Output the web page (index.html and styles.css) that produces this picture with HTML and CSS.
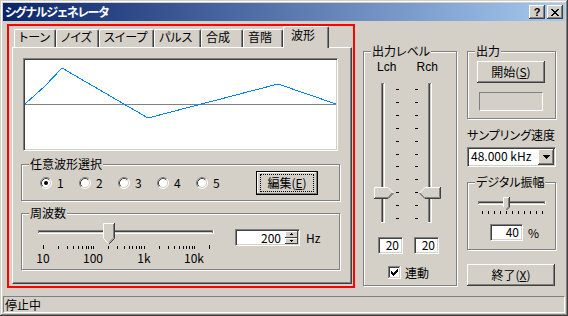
FILE: index.html
```html
<!DOCTYPE html>
<html lang="ja">
  <head>
    <meta charset="utf-8" />
    <title>シグナルジェネレータ</title>
    <link rel="stylesheet" href="styles.css">
  </head>

  <body>
    <div class="window">
      <!-- Title bar -->
      <div class="titlebar">
        <span class="title">シグナルジェネレータ</span>
        <div class="caption-buttons">
          <div class="cap-btn cap-help">?</div>
          <div class="cap-btn">
            <svg width="8" height="7" viewBox="0 0 8 7">
              <path d="M0 0h2v1h-2z M6 0h2v1h-2z M1 1h2v1h-2z M5 1h2v1h-2z M2 2h4v1h-4z M3 3h2v1h-2z M2 4h4v1h-4z M1 5h2v1h-2z M5 5h2v1h-2z M0 6h2v1h-2z M6 6h2v1h-2z" fill="#000"/>
            </svg>
          </div>
        </div>
      </div>

      <div class="client">
        <!-- Tab control (highlighted) -->
        <div class="highlight">
          <div class="tabs">
            <div class="tab tab-tone">トーン</div>
            <div class="tab tab-noise">ノイズ</div>
            <div class="tab tab-sweep">スイープ</div>
            <div class="tab tab-pulse">パルス</div>
            <div class="tab tab-synth">合成</div>
            <div class="tab tab-scale">音階</div>
            <div class="tab tab-wave active">波形</div>
          </div>
          <div class="tab-panel">
            <div class="wave-view">
              <svg width="311" height="89" viewBox="0 0 311 89">
                <line x1="0" y1="44.5" x2="311" y2="44.5" stroke="#808080"/>
                <polyline points="0,44 20,26 37,8 123,58 253,24 311,44" fill="none" stroke="#0080ff" shape-rendering="crispEdges"/>
              </svg>
            </div>

            <div class="group wave-select">
              <div class="group-title">任意波形選択</div>
              <div class="radio-row">
                <div class="radio">
                  <svg width="12" height="12" viewBox="0 0 12 12">
                    <circle cx="6" cy="6" r="5" fill="#fff"/>
                    <path d="M2.11 9.89A5.5 5.5 0 0 1 9.89 2.11" fill="none" stroke="#808080"/>
                    <path d="M9.89 2.11A5.5 5.5 0 0 1 2.11 9.89" fill="none" stroke="#fff"/>
                    <path d="M2.82 9.18A4.5 4.5 0 0 1 9.18 2.82" fill="none" stroke="#404040"/>
                    <path d="M9.18 2.82A4.5 4.5 0 0 1 2.82 9.18" fill="none" stroke="#d4d0c8"/>
                    <circle cx="6" cy="6" r="2" fill="#000"/>
                  </svg>
                  <span>1</span>
                </div>
                <div class="radio">
                  <svg width="12" height="12" viewBox="0 0 12 12">
                    <circle cx="6" cy="6" r="5" fill="#fff"/>
                    <path d="M2.11 9.89A5.5 5.5 0 0 1 9.89 2.11" fill="none" stroke="#808080"/>
                    <path d="M9.89 2.11A5.5 5.5 0 0 1 2.11 9.89" fill="none" stroke="#fff"/>
                    <path d="M2.82 9.18A4.5 4.5 0 0 1 9.18 2.82" fill="none" stroke="#404040"/>
                    <path d="M9.18 2.82A4.5 4.5 0 0 1 2.82 9.18" fill="none" stroke="#d4d0c8"/>
                  </svg>
                  <span>2</span>
                </div>
                <div class="radio">
                  <svg width="12" height="12" viewBox="0 0 12 12">
                    <circle cx="6" cy="6" r="5" fill="#fff"/>
                    <path d="M2.11 9.89A5.5 5.5 0 0 1 9.89 2.11" fill="none" stroke="#808080"/>
                    <path d="M9.89 2.11A5.5 5.5 0 0 1 2.11 9.89" fill="none" stroke="#fff"/>
                    <path d="M2.82 9.18A4.5 4.5 0 0 1 9.18 2.82" fill="none" stroke="#404040"/>
                    <path d="M9.18 2.82A4.5 4.5 0 0 1 2.82 9.18" fill="none" stroke="#d4d0c8"/>
                  </svg>
                  <span>3</span>
                </div>
                <div class="radio">
                  <svg width="12" height="12" viewBox="0 0 12 12">
                    <circle cx="6" cy="6" r="5" fill="#fff"/>
                    <path d="M2.11 9.89A5.5 5.5 0 0 1 9.89 2.11" fill="none" stroke="#808080"/>
                    <path d="M9.89 2.11A5.5 5.5 0 0 1 2.11 9.89" fill="none" stroke="#fff"/>
                    <path d="M2.82 9.18A4.5 4.5 0 0 1 9.18 2.82" fill="none" stroke="#404040"/>
                    <path d="M9.18 2.82A4.5 4.5 0 0 1 2.82 9.18" fill="none" stroke="#d4d0c8"/>
                  </svg>
                  <span>4</span>
                </div>
                <div class="radio">
                  <svg width="12" height="12" viewBox="0 0 12 12">
                    <circle cx="6" cy="6" r="5" fill="#fff"/>
                    <path d="M2.11 9.89A5.5 5.5 0 0 1 9.89 2.11" fill="none" stroke="#808080"/>
                    <path d="M9.89 2.11A5.5 5.5 0 0 1 2.11 9.89" fill="none" stroke="#fff"/>
                    <path d="M2.82 9.18A4.5 4.5 0 0 1 9.18 2.82" fill="none" stroke="#404040"/>
                    <path d="M9.18 2.82A4.5 4.5 0 0 1 2.82 9.18" fill="none" stroke="#d4d0c8"/>
                  </svg>
                  <span>5</span>
                </div>
                <div class="btn btn-default edit-btn">
                  <span class="focus-rect">編集(<u>E</u>)</span>
                </div>
              </div>
            </div>

            <div class="group freq-group">
              <div class="group-title">周波数</div>
              <div class="freq-row">
                <svg class="freq-track" width="190" height="46" viewBox="0 0 190 46">
                  <rect x="8" y="10" width="176" height="4" fill="#fff"/>
                  <rect x="8" y="10" width="175" height="3" fill="#808080"/>
                  <rect x="9" y="11" width="173" height="2" fill="#404040"/>
                  <rect x="9" y="12" width="173" height="1" fill="#d4d0c8"/>
                  <path d="M13.5 25V29 M179.5 25V29
                           M28.5 26V29 M37.5 26V29 M43.5 26V29 M48.5 26V29 M52.5 26V29 M56.5 26V29 M58.5 26V29 M61.5 26V29
                           M63.5 26V29 M78.5 26V29 M87.5 26V29 M94.5 26V29 M99.5 26V29 M102.5 26V29 M106.5 26V29 M109.5 26V29 M111.5 26V29
                           M114.5 26V29 M129.5 26V29 M138.5 26V29 M144.5 26V29 M149.5 26V29 M153.5 26V29 M156.5 26V29 M159.5 26V29 M162.5 26V29
                           M164.5 26V29" stroke="#000" shape-rendering="crispEdges"/>
                  <polygon points="73,3 85,3 85,18 79,24 73,18" fill="#d4d0c8"/>
                  <polyline points="73.5,18 73.5,3.5 84,3.5" fill="none" stroke="#fff"/>
                  <polyline points="73.5,18.5 78.5,23.5" fill="none" stroke="#fff"/>
                  <polyline points="84.5,3 84.5,18.5 79,24" fill="none" stroke="#404040"/>
                  <polyline points="83.5,4 83.5,18 79,22.5" fill="none" stroke="#808080"/>
                  <text x="13" y="43" text-anchor="middle">10</text>
                  <text x="63" y="43" text-anchor="middle">100</text>
                  <text x="114" y="43" text-anchor="middle">1k</text>
                  <text x="164" y="43" text-anchor="middle">10k</text>
                </svg>
                <div class="spin-edit">
                  <span class="spin-value">200</span>
                  <div class="spin-buttons">
                    <div class="spin-btn">
                      <svg width="3" height="2" viewBox="0 0 3 2"><path d="M1 0h1v1h1v1h-3v-1h1z" fill="#000"/></svg>
                    </div>
                    <div class="spin-btn">
                      <svg width="3" height="2" viewBox="0 0 3 2"><path d="M0 0h3v1h-1v1h-1v-1h-1z" fill="#000"/></svg>
                    </div>
                  </div>
                </div>
                <span class="unit">Hz</span>
              </div>
            </div>
          </div>
        </div>

        <!-- Right side controls -->
        <div class="side">
          <div class="group level-group">
            <div class="group-title">出力レベル</div>
            <div class="ch-labels"><span>Lch</span><span>Rch</span></div>
            <svg class="level-sliders" width="92" height="150" viewBox="0 0 92 150">
              <rect x="17" y="4" width="4" height="140" fill="#fff"/>
              <rect x="17" y="4" width="3" height="139" fill="#808080"/>
              <rect x="18" y="5" width="2" height="138" fill="#404040"/>
              <rect x="19" y="5" width="1" height="138" fill="#d4d0c8"/>
              <rect x="64" y="4" width="4" height="140" fill="#fff"/>
              <rect x="64" y="4" width="3" height="139" fill="#808080"/>
              <rect x="65" y="5" width="2" height="138" fill="#404040"/>
              <rect x="66" y="5" width="1" height="138" fill="#d4d0c8"/>
              <path d="M32 10.5h3 M51 10.5h3 M32 23.5h3 M51 23.5h3 M32 36.5h3 M51 36.5h3 M32 49.5h3 M51 49.5h3
                       M32 62.5h3 M51 62.5h3 M32 75.5h3 M51 75.5h3 M32 87.5h3 M51 87.5h3 M32 100.5h3 M51 100.5h3
                       M32 113.5h3 M51 113.5h3 M32 126.5h3 M51 126.5h3 M32 139.5h3 M51 139.5h3" stroke="#000" shape-rendering="crispEdges"/>
              <polygon points="10,108 24,108 30,114 24,120 10,120" fill="#d4d0c8"/>
              <polyline points="10.5,119.5 10.5,108.5 24,108.5 29.5,114" fill="none" stroke="#fff"/>
              <polyline points="29.5,114 24,119.5 10,119.5" fill="none" stroke="#404040"/>
              <polyline points="28,114 24,118.5 11,118.5" fill="none" stroke="#808080"/>
              <polygon points="61,108 77,108 77,120 61,120 55,114" fill="#d4d0c8"/>
              <polyline points="55.5,114 61,108.5 76.5,108.5" fill="none" stroke="#fff"/>
              <polyline points="76.5,108 76.5,119.5 61,119.5 55.5,114" fill="none" stroke="#404040"/>
              <polyline points="75.5,109 75.5,118.5 61,118.5" fill="none" stroke="#808080"/>
            </svg>
            <div class="level-edits">
              <div class="edit level-edit">20</div>
              <div class="edit level-edit">20</div>
            </div>
            <div class="link-row">
              <svg width="13" height="13" viewBox="0 0 13 13">
                <rect width="13" height="13" fill="#fff"/>
                <path d="M0 0h12v1H1v11H0z" fill="#808080"/>
                <path d="M1 1h10v1H2v9H1z" fill="#404040"/>
                <path d="M12 0h1v13H0v-1h12z" fill="#fff"/>
                <path d="M11 1h1v11H1v-1h10z" fill="#d4d0c8"/>
                <path d="M9 3h1v1h-1z M8 4h2v1h-2z M3 5h1v1h-1z M7 5h3v1h-3z M3 6h2v1h-2z M6 6h3v1h-3z M3 7h5v1h-5z M4 8h3v1h-3z M5 9h1v1h-1z" fill="#000"/>
              </svg>
              <span>連動</span>
            </div>
          </div>

          <div class="side-col">
            <div class="group out-group">
              <div class="group-title">出力</div>
              <div class="btn start-btn">開始(<u>S</u>)</div>
              <div class="out-indicator"></div>
            </div>
            <div class="rate-label">サンプリング速度</div>
            <div class="combo">
              <span class="combo-value">48.000 kHz</span>
              <div class="combo-btn">
                <svg width="7" height="4" viewBox="0 0 7 4"><path d="M0 0h7v1h-1v1h-1v1h-1v1h-1v-1h-1v-1h-1v-1h-1z" fill="#000"/></svg>
              </div>
            </div>
            <div class="group amp-group">
              <div class="group-title">デジタル振幅</div>
              <svg class="amp-track" width="87" height="24" viewBox="0 0 87 24">
                <rect x="10" y="8" width="68" height="4" fill="#fff"/>
                <rect x="10" y="8" width="67" height="3" fill="#808080"/>
                <rect x="11" y="9" width="65" height="2" fill="#404040"/>
                <rect x="11" y="10" width="65" height="1" fill="#d4d0c8"/>
                <path d="M14.5 18V21 M20.5 18V21 M26.5 18V21 M32.5 18V21 M38.5 18V21 M44.5 18V21 M50.5 18V21 M56.5 18V21 M62.5 18V21 M68.5 18V21 M74.5 18V21" stroke="#000" shape-rendering="crispEdges"/>
                <polygon points="35,4 42,4 42,14 38.5,17.5 35,14" fill="#d4d0c8"/>
                <polyline points="35.5,14 35.5,4.5 41,4.5" fill="none" stroke="#fff"/>
                <polyline points="41.5,4 41.5,14 38.5,17" fill="none" stroke="#404040"/>
                <polyline points="40.5,5 40.5,14 38.5,16" fill="none" stroke="#808080"/>
              </svg>
              <div class="amp-row">
                <div class="edit amp-edit">40</div>
                <span>%</span>
              </div>
            </div>
            <div class="btn exit-btn">終了(<u>X</u>)</div>
          </div>
        </div>
      </div>

      <!-- Status bar -->
      <div class="statusbar">
        <div class="status-pane">停止中</div>
      </div>
    </div>
  </body>
</html>
```

FILE: styles.css
```css
body {
  margin: 0;
  font-family: "Noto Sans CJK JP", sans-serif;
  font-size: 12px;
  font-feature-settings: "palt";
  color: #000;
  background: #d4d0c8;
}

.window {
  width: 568px;
  height: 316px;
  box-sizing: border-box;
  padding: 3px;
  display: flex;
  flex-direction: column;
  background: #d4d0c8;
  box-shadow: inset -1px -1px #404040, inset 1px 1px #d4d0c8,
    inset -2px -2px #808080, inset 2px 2px #fff;
}

/* title bar */
.titlebar {
  flex: none;
  height: 18px;
  display: flex;
  align-items: center;
  padding: 0 2px;
  background: linear-gradient(to right, #0a246a, #a6caf0);
}

.title {
  flex: 1;
  color: white;
  font-weight: bold;
  letter-spacing: -1px;
  line-height: 18px;
  white-space: nowrap;
}

.caption-buttons {
  display: flex;
  gap: 2px;
}

.cap-btn {
  width: 16px;
  height: 14px;
  box-sizing: border-box;
  display: flex;
  align-items: center;
  justify-content: center;
  background: #d4d0c8;
  box-shadow: inset -1px -1px #404040, inset 1px 1px #fff, inset -2px -2px #808080;
}

.cap-help {
  font: bold 11px "Liberation Sans", sans-serif;
  line-height: 14px;
}

/* client area */
.client {
  flex: 1;
  display: flex;
  align-items: flex-start;
  padding: 3px 0 0 4px;
}

.highlight {
  width: 348px;
  height: 264px;
  box-sizing: border-box;
  border: 2px solid #ff0000;
  padding: 0 1px 2px 3px;
}

/* tabs */
.tabs {
  height: 21px;
  display: flex;
  align-items: flex-end;
  padding-left: 2px;
}

.tab {
  height: 18px;
  box-sizing: border-box;
  border-top: 1px solid #fff;
  border-left: 1px solid #fff;
  border-right: 1px solid #404040;
  border-radius: 2px 2px 0 0;
  box-shadow: inset -1px 0 #808080;
  padding-left: 4px;
  line-height: 14px;
  white-space: nowrap;
}

.tab-tone { width: 42px; }
.tab-noise { width: 43px; }
.tab-sweep { width: 55px; }
.tab-pulse { width: 47px; }
.tab-synth { width: 42px; }
.tab-scale { width: 40px; }

.tab.active {
  width: 46px;
  height: 22px;
  margin-bottom: -1px;
  padding: 1px 0 0 7px;
  position: relative;
  z-index: 1;
  background: #d4d0c8;
}

.tab-panel {
  width: 340px;
  height: 237px;
  box-sizing: border-box;
  border: 1px solid #404040;
  border-top-color: #fff;
  border-left-color: #fff;
  box-shadow: inset -1px -1px #808080;
  padding: 10px 0 0 8px;
}

.wave-view {
  width: 315px;
  height: 93px;
  box-sizing: border-box;
  margin-left: 2px;
  padding: 1px;
  background: #fff;
  border: 1px solid;
  border-color: #808080 #fff #fff #808080;
  box-shadow: inset 1px 1px #404040, inset -1px -1px #d4d0c8;
}

.wave-view svg {
  display: block;
}

/* group boxes */
.group {
  box-sizing: border-box;
  border: 1px solid #808080;
  box-shadow: inset 1px 1px #fff, 1px 1px #fff;
}

.group-title {
  width: fit-content;
  margin: -8px 0 0 7px;
  padding: 0 1px;
  line-height: 14px;
  background: #d4d0c8;
  white-space: nowrap;
}

.wave-select {
  width: 319px;
  height: 37px;
  margin-top: 13px;
}

.radio-row {
  height: 24px;
  display: flex;
  align-items: center;
  padding: 0 21px 0 18px;
}

.radio {
  width: 39px;
  display: flex;
  align-items: center;
  gap: 5px;
  line-height: 14px;
}

.radio svg {
  display: block;
}

/* buttons */
.btn {
  box-sizing: border-box;
  display: flex;
  align-items: center;
  justify-content: center;
  background: #d4d0c8;
  box-shadow: inset -1px -1px #404040, inset 1px 1px #fff, inset -2px -2px #808080;
  line-height: 14px;
  white-space: nowrap;
}

.btn-default {
  border: 1px solid #000;
  box-shadow: inset -1px -1px #808080, inset 1px 1px #fff;
}

.edit-btn {
  width: 62px;
  height: 24px;
  margin-left: auto;
  align-items: stretch;
}

.focus-rect {
  flex: 1;
  margin: 2px 3px;
  border: 1px dotted #000;
  display: flex;
  align-items: center;
  justify-content: center;
}

.freq-group {
  width: 319px;
  height: 57px;
  margin-top: 12px;
}

.freq-row {
  display: flex;
  align-items: flex-start;
}

.freq-track {
  display: block;
  margin-left: 8px;
}

/* edit boxes */
.edit,
.spin-edit,
.combo {
  box-sizing: border-box;
  background: #fff;
  border: 1px solid;
  border-color: #808080 #fff #fff #808080;
  box-shadow: inset 1px 1px #404040, inset -1px -1px #d4d0c8;
}

.edit {
  height: 17px;
  padding: 1px 3px 0 0;
  text-align: right;
  line-height: 11px;
}

.spin-edit {
  width: 65px;
  height: 17px;
  margin: 9px 0 0 15px;
  display: flex;
  padding: 1px;
}

.spin-value {
  flex: 1;
  text-align: right;
  padding: 1px 4px 0 0;
  line-height: 11px;
}

.spin-buttons {
  width: 13px;
  display: flex;
  flex-direction: column;
}

.spin-btn {
  flex: 1;
  display: flex;
  align-items: center;
  justify-content: center;
  background: #d4d0c8;
  box-shadow: inset -1px -1px #404040, inset 1px 1px #fff;
}

.spin-btn svg {
  display: block;
}

.unit {
  margin: 9px 0 0 6px;
  line-height: 17px;
}

/* right side */
.side {
  display: flex;
  align-items: flex-start;
  gap: 10px;
  margin: 27px 0 0 8px;
}

.level-group {
  width: 94px;
  height: 235px;
}

.ch-labels {
  display: flex;
  margin-top: 2px;
  padding-left: 13px;
  font-family: "Liberation Sans", "Noto Sans CJK JP", sans-serif;
  line-height: 14px;
}

.ch-labels span {
  width: 42px;
}

.level-sliders {
  display: block;
  margin-top: 5px;
}

.level-edits {
  display: flex;
  gap: 11px;
  margin-top: 8px;
  padding-left: 14px;
}

.level-edit {
  width: 25px;
}

.link-row {
  display: flex;
  align-items: center;
  gap: 4px;
  margin-top: 12px;
  padding-left: 24px;
  line-height: 13px;
}

.link-row svg {
  display: block;
}

.side-col {
  width: 89px;
  display: flex;
  flex-direction: column;
}

.out-group {
  height: 68px;
}

.start-btn {
  width: 68px;
  height: 22px;
  margin: 3px 0 0 9px;
}

.out-indicator {
  width: 64px;
  height: 19px;
  box-sizing: border-box;
  margin: 9px 0 0 11px;
  border: 1px solid;
  border-color: #808080 #fff #fff #808080;
}

.rate-label {
  margin-top: 9px;
  line-height: 14px;
  white-space: nowrap;
}

.combo {
  height: 20px;
  margin-top: 5px;
  display: flex;
  padding: 1px;
}

.combo-value {
  flex: 1;
  padding-left: 2px;
  line-height: 13px;
}

.combo-btn {
  width: 16px;
  display: flex;
  align-items: center;
  justify-content: center;
  background: #d4d0c8;
  box-shadow: inset -1px -1px #404040, inset 1px 1px #fff, inset -2px -2px #808080;
}

.amp-group {
  height: 68px;
  margin-top: 15px;
}

.amp-track {
  display: block;
  margin-top: 4px;
}

.amp-row {
  display: flex;
  align-items: center;
  gap: 5px;
  margin-top: 7px;
  padding-left: 22px;
  line-height: 14px;
}

.amp-edit {
  width: 33px;
}

.exit-btn {
  width: 88px;
  height: 22px;
  margin-top: 14px;
}

/* status bar */
.statusbar {
  flex: none;
  height: 17px;
}

.status-pane {
  height: 17px;
  box-sizing: border-box;
  border: 1px solid;
  border-color: #808080 #fff #fff #808080;
  padding: 1px 0 0 1px;
  line-height: 13px;
}
```
